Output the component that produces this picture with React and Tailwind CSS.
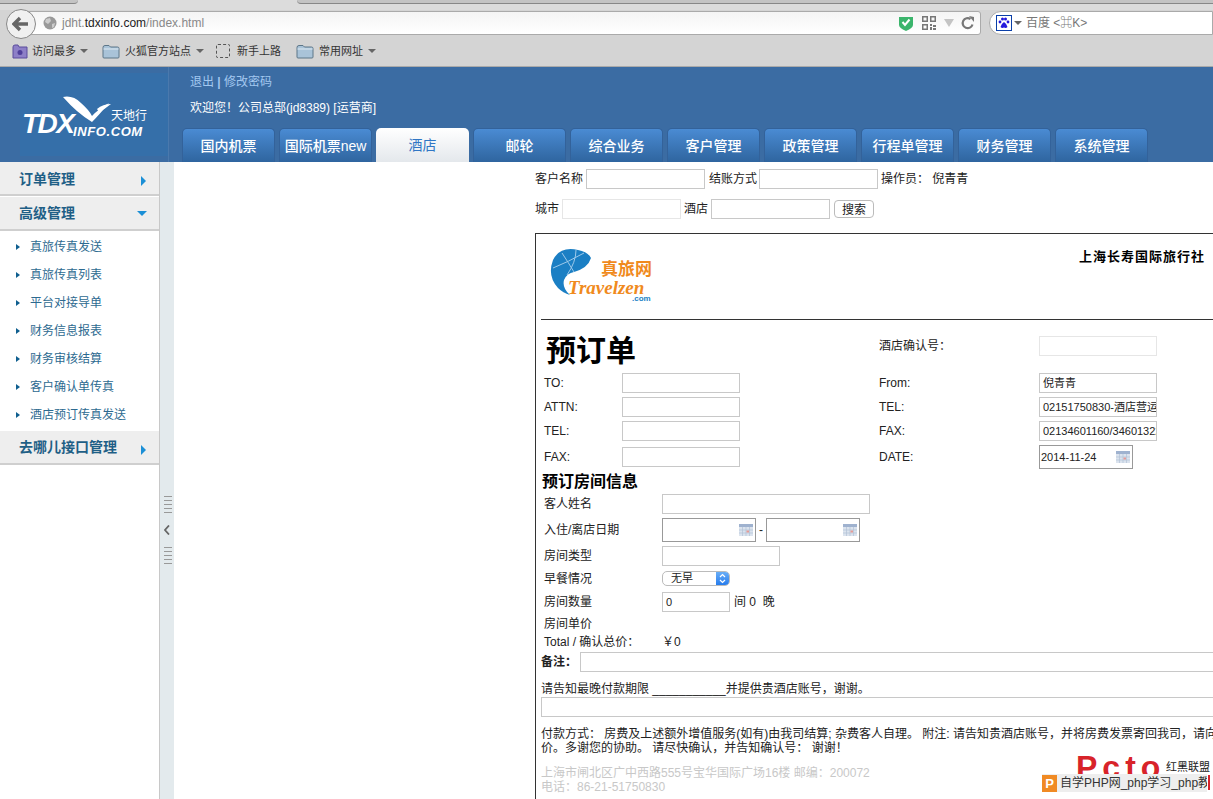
const font = '[font-family:"Liberation_Sans","Noto_Sans_CJK_SC",sans-serif]'

const tabs = ['国内机票', '国际机票new', '酒店', '邮轮', '综合业务', '客户管理', '政策管理', '行程单管理', '财务管理', '系统管理']
const subItems = ['真旅传真发送', '真旅传真列表', '平台对接导单', '财务信息报表', '财务审核结算', '客户确认单传真', '酒店预订传真发送']

function Folder() {
  return (
    <svg width="18" height="15" viewBox="0 0 18 15">
      <path d="M1 3.5 Q1 1.5 3 1.5 H7 L8.5 3 H15.5 Q17 3 17 4.5 V13 Q17 14 16 14 H2 Q1 14 1 13 Z" fill="#a9c3d8" stroke="#5d7688" />
      <path d="M1.5 5 H16.5" stroke="#dfeaf2" />
    </svg>
  )
}

function Calendar() {
  return (
    <svg width="14" height="12" viewBox="0 0 14 12" className="shrink-0">
      <rect width="14" height="12" fill="#dbe3ee" />
      <rect width="14" height="3" fill="#9fb2cf" />
      <path d="M0 6H14M0 9H14M3.5 3V12M7 3V12M10.5 3V12" stroke="#b3c1d6" strokeWidth="0.7" />
      <rect x="7.5" y="6.5" width="2.5" height="2" fill="#e59a96" />
    </svg>
  )
}

function Caret() {
  return <span className="inline-block w-0 h-0 border-x-[4px] border-x-transparent border-t-[4px] border-t-[#666]" />
}

function BrowserChrome() {
  return (
    <div className="h-[67px] shrink-0 bg-[#d4d4d4] border-b border-[#aaa] flex flex-col">
      <div className="h-[10px] bg-[#dcdcdc] flex">
        <div className="w-[78px] h-[4px] bg-[#c4c4c4] border-b border-[#888] rounded-br-md" />
        <div className="ml-[219px] flex-1 h-[4px] bg-[#c4c4c4] border-b border-[#888] rounded-bl-md" />
      </div>
      <div className="h-[26px] flex items-center relative pl-[20px] pr-0">
        <div className="absolute left-[6px] top-[-1px] w-[30px] h-[30px] rounded-full border border-[#888] bg-[#f0f0f0] flex items-center justify-center z-10">
          <svg width="18" height="16" viewBox="0 0 18 16"><path d="M8 2 L2 8 L8 14 M2 8 H16" fill="none" stroke="#666" strokeWidth="3.4" /></svg>
        </div>
        <div className="w-[961px] h-[24px] bg-gradient-to-b from-[#f4f4f4] to-white border border-[#aaa] rounded-[3px] flex items-center pl-[22px] pr-[5px] text-[12px]">
          <svg width="14" height="14" viewBox="0 0 14 14" className="shrink-0"><circle cx="7" cy="7" r="6.5" fill="#999" /><path d="M3 3 L7 2 L8 5 L5 8 L2 6Z M9 8 L12 7 L11 11 L9 12Z" fill="#ccc" /></svg>
          <span className="ml-[5px] text-[#888]">jdht.<span className="text-[#222]">tdxinfo.com</span>/index.html</span>
          <div className="ml-auto flex items-center">
            <svg width="14" height="15" viewBox="0 0 14 15"><path d="M0 1 H14 V9 Q14 12 7 15 Q0 12 0 9Z" fill="#3bb56c" /><path d="M3.5 6 L6 9 L10.5 3.5" fill="none" stroke="#fff" strokeWidth="2" /></svg>
            <svg width="14" height="14" viewBox="0 0 14 14" className="ml-[9px]" fill="#777"><path d="M0 0H6V6H0Z M1.5 1.5V4.5H4.5V1.5Z M8 0H14V6H8Z M9.5 1.5V4.5H12.5V1.5Z M0 8H6V14H0Z M1.5 9.5V12.5H4.5V9.5Z M8 8H10V10H8Z M11 9H14V11H11Z M8 11H10V14H8Z M11 12H14V14H11Z" fillRule="evenodd" /></svg>
            <span className="ml-[8px] w-0 h-0 border-x-[5px] border-x-transparent border-t-[8px] border-t-[#c4c4c4]" />
            <svg width="14" height="14" viewBox="0 0 14 14" className="ml-[7px]"><path d="M11.5 8.5 A5 5 0 1 1 9.5 3" fill="none" stroke="#777" strokeWidth="2.2" /><path d="M8 0 L13 1 V6Z" fill="#777" /></svg>
          </div>
        </div>
        <div className="ml-[8px] flex-1 h-[24px] bg-white border border-[#aaa] rounded-l-[12px] flex items-center pl-[6px] text-[12px] text-[#777]">
          <span className="w-[16px] h-[16px] border border-[#0a3fa8] bg-white flex items-center justify-center">
            <svg width="12" height="12" viewBox="0 0 12 12" fill="#2319dc"><circle cx="2" cy="5" r="1.4" /><circle cx="4.5" cy="2" r="1.5" /><circle cx="7.5" cy="2" r="1.5" /><circle cx="10" cy="5" r="1.4" /><path d="M6 5 Q9 7 9.5 10 Q8 11.5 6 10.5 Q4 11.5 2.5 10 Q3 7 6 5Z" /></svg>
          </span>
          <span className="ml-[2px] mr-[4px] flex items-center"><Caret /></span>
          <span>百度 &lt;⌘K&gt;</span>
        </div>
      </div>
      <div className="flex-1 flex items-center pl-[12px] text-[11px] text-[#333]">
        <span className="flex items-center gap-[4px] w-[90px]">
          <svg width="16" height="15" viewBox="0 0 16 15"><path d="M1 3 Q1 1 3 1 H6 L7 3 H15 V14 H1Z" fill="#8d7fc7" stroke="#5b4c9c" /><circle cx="8" cy="8.5" r="2.5" fill="#4f3f9a" /></svg>
          访问最多 <Caret />
        </span>
        <span className="flex items-center gap-[5px] w-[114px]"><Folder />火狐官方站点 <Caret /></span>
        <span className="flex items-center gap-[7px] w-[80px]">
          <span className="w-[14px] h-[14px] border border-dashed border-[#555] rounded-[2px]" />新手上路
        </span>
        <span className="flex items-center gap-[5px]"><Folder />常用网址 <Caret /></span>
      </div>
    </div>
  )
}

function Header() {
  return (
    <div className="h-[95px] shrink-0 bg-[#3b6ca3] flex">
      <div className="w-[169px] pl-[20px] pt-[6px] border-r border-[#4a79ad] relative">
        <div className="w-[148px] h-[83px] bg-[#356fa9] relative text-white italic font-bold">
          <svg width="60" height="40" viewBox="0 0 60 40" className="absolute left-[41px] top-[22px]">
            <path d="M2 2 Q12 0 20 8 Q28 15 31 21 Q35 16 48 8 Q38 20 31 27 Q16 18 2 2Z" fill="#fff" />
            <path d="M36 14 Q42 9 50 9 Q44 14 38 17Z" fill="#fff" />
          </svg>
          <span className="absolute left-[2px] top-[37px] text-[28px] leading-none tracking-[-1.5px]">TDX</span>
          <span className="absolute left-[53px] top-[52px] text-[13px] leading-none tracking-[0.6px]">INFO.COM</span>
          <span className="absolute left-[91px] top-[37px] text-[12px] leading-none not-italic font-normal">天地行</span>
        </div>
      </div>
      <div className="pl-[13px] flex flex-col">
        <div className="pl-[8px] pt-[7px] text-[12px] leading-[16px] text-[#a3c8f0]">退出 <span className="font-bold">|</span> 修改密码</div>
        <div className="pl-[8px] pt-[10px] text-[12px] leading-[16px] text-white">欢迎您！公司总部(jd8389) [运营商]</div>
        <div className="flex gap-[4px] mt-auto">
          {tabs.map((t) => t === '酒店' ? (
            <div key={t} className="w-[93px] h-[34px] pt-[1px] rounded-t-[5px] bg-gradient-to-b from-white to-[#e4e8ec] text-[#2f76c5] text-[14px] flex items-center justify-center">{t}</div>
          ) : (
            <div key={t} className="w-[93px] h-[34px] pt-[1px] rounded-t-[5px] border border-b-0 border-[#33629a] bg-gradient-to-b from-[#4a8bd3] to-[#2f659f] text-white text-[14px] font-medium whitespace-nowrap flex items-center justify-center">{t}</div>
          ))}
        </div>
      </div>
    </div>
  )
}

function SideHead({ label, open, textClass = '' }) {
  return (
    <div className="h-[34px] bg-[#eeeeee] border-b-2 border-[#cfcfcf] flex items-center pl-[19px] pr-[12px] text-[14px] font-bold text-[#1f5f86]">
      <span className={`flex-1 ${textClass}`}>{label}</span>
      {open
        ? <span className="w-0 h-0 border-x-[5px] border-x-transparent border-t-[5px] border-t-[#1b8fd6]" />
        : <span className="mt-[6px] mr-[1px] w-0 h-0 border-y-[5px] border-y-transparent border-l-[5px] border-l-[#1b8fd6]" />}
    </div>
  )
}

function Sidebar() {
  return (
    <div className="w-[160px] shrink-0 border-r border-[#c8c8c8] bg-white">
      <SideHead label="订单管理" textClass="mt-[2px]" />
      <div className="h-px" />
      <SideHead label="高级管理" open />
      <div className="pt-[2px] pb-[2px]">
        {subItems.map((s) => (
          <div key={s} className="h-[28px] flex items-center pl-[16px] text-[12px] text-[#2d6a90]">
            <span className="w-0 h-0 border-y-[3.5px] border-y-transparent border-l-[4px] border-l-[#0f5f8f] mr-[10px]" />
            {s}
          </div>
        ))}
      </div>
      <SideHead label="去哪儿接口管理" />
    </div>
  )
}

function Splitter() {
  const bars = [0, 1, 2, 3, 4]
  return (
    <div className="w-[14px] shrink-0 bg-[#e3eaed] flex flex-col items-center pt-[334px] pl-[1px]">
      <div className="flex flex-col gap-[3px] w-[8px]">{bars.map((b) => <div key={b} className="h-px bg-[#999]" />)}</div>
      <svg width="6" height="10" viewBox="0 0 6 10" className="mt-[12px] mb-[12px] -ml-[1px]"><path d="M5 0.5 L1 5 L5 9.5" fill="none" stroke="#666" strokeWidth="1.8" /></svg>
      <div className="flex flex-col gap-[3px] w-[8px]">{bars.map((b) => <div key={b} className="h-px bg-[#999]" />)}</div>
    </div>
  )
}

function Field({ className = '', children }) {
  return <div className={`h-[20px] border border-[#c8c8c8] bg-white overflow-hidden whitespace-nowrap pl-[3px] flex items-center text-[11px] ${className}`}>{children}</div>
}

function DateField({ className = '', value }) {
  return (
    <div className={`h-[24px] border border-[#999] bg-white flex items-center justify-between pr-[2px] pl-[1px] text-[11px] ${className}`}>
      <span>{value}</span><Calendar />
    </div>
  )
}

function LeftRow({ label, mt = 'mt-[4px]' }) {
  return (
    <div className={`flex items-center h-[20px] ${mt}`}>
      <span className="w-[78px]">{label}</span>
      <Field className="w-[118px]" />
    </div>
  )
}

function RightRow({ label, children, mt = 'mt-[4px]' }) {
  return (
    <div className={`flex items-center h-[20px] ${mt}`}>
      <span className="w-[160px]">{label}</span>
      {children}
    </div>
  )
}

function RoomRow({ label, h = 'h-[20px]', mt = 'mt-0', children }) {
  return (
    <div className={`flex items-center ${h} ${mt}`}>
      <span className="w-[118px] whitespace-nowrap">{label}</span>
      {children}
    </div>
  )
}

function TravelzenLogo() {
  return (
    <div className="relative w-[102px] h-[58px]">
      <svg width="102" height="58" viewBox="0 0 102 58" className="absolute inset-0">
        <path d="M28 2 Q10 -2 3 12 Q-3 28 8 40 Q13 45 20 47 Q12 40 14 32 Q17 25 24 24 Q38 20 41 10 Q38 4 28 2Z" fill="#1b7fc4" />
        <path d="M3 20 Q18 14 34 5 M12 5 Q18 14 24 24 M26 2 Q26 14 17 27" fill="none" stroke="#9dc9ea" strokeWidth="1" />
      </svg>
      <span className="absolute left-[51px] top-[11px] text-[17px] leading-none font-bold text-[#f08a1d] [font-family:'Noto_Sans_CJK_SC',sans-serif]">真旅网</span>
      <span className="absolute left-[18px] top-[30px] text-[19px] leading-none font-bold italic text-[#f08a1d] [font-family:'Liberation_Serif',serif]">Travelzen</span>
      <span className="absolute left-[82px] top-[47px] text-[8px] leading-none font-bold text-[#1b7fc4]">.com</span>
    </div>
  )
}

function Document() {
  return (
    <div className="mt-[14px] w-[900px] border border-[#333] pl-[5px] pb-[60px] text-[12px] text-[#222]">
      <div className="h-[86px] border-b border-[#333] relative pl-[9px] pt-[14px]">
        <TravelzenLogo />
        <div className="absolute left-[538px] top-[14px] text-[13px] leading-[18px] font-bold tracking-[1px] text-black">上海长寿国际旅行社</div>
      </div>

      <div className="flex">
        <div className="w-[338px] pl-[3px]">
          <div className="h-[53px] text-[30px] font-bold leading-[53px] text-black pl-[2px] pt-[4px]">预订单</div>
          <LeftRow label="TO:" mt="mt-0" />
          <LeftRow label="ATTN:" />
          <LeftRow label="TEL:" />
          <LeftRow label="FAX:" mt="mt-[6px]" />
        </div>
        <div>
          <RightRow label="酒店确认号：" mt="mt-[16px]"><Field className="w-[118px] border-[#e6e6e6]" /></RightRow>
          <RightRow label="From:" mt="mt-[17px]"><Field className="w-[118px]">倪青青</Field></RightRow>
          <RightRow label="TEL:"><Field className="w-[118px]">02151750830-酒店营运</Field></RightRow>
          <RightRow label="FAX:"><Field className="w-[118px]">02134601160/34601322</Field></RightRow>
          <RightRow label="DATE:" mt="mt-[6px]"><DateField className="w-[94px]" value="2014-11-24" /></RightRow>
        </div>
      </div>

      <div className="pl-[1px] mt-[5px] text-[16px] leading-[20px] font-bold text-black">预订房间信息</div>
      <div className="pl-[3px] mt-[2px]">
        <RoomRow label="客人姓名"><Field className="w-[208px]" /></RoomRow>
        <RoomRow label="入住/离店日期" h="h-[24px]" mt="mt-[4px]">
          <DateField className="w-[94px]" />
          <span className="w-[10px] text-center">-</span>
          <DateField className="w-[94px]" />
        </RoomRow>
        <RoomRow label="房间类型" mt="mt-[4px]"><Field className="w-[118px]" /></RoomRow>
        <RoomRow label="早餐情况" h="h-[15px]" mt="mt-[5px]">
          <div className="w-[68px] h-[15px] border border-[#bbb] rounded-[5px] bg-white flex items-center justify-between text-[11px] pl-[8px] overflow-hidden">
            无早
            <span className="w-[13px] h-[15px] bg-gradient-to-b from-[#6db1f7] to-[#1f78ec] flex items-center justify-center">
              <svg width="7" height="11" viewBox="0 0 7 11"><path d="M1 4 L3.5 1.5 L6 4 M1 7 L3.5 9.5 L6 7" fill="none" stroke="#fff" strokeWidth="1.2" /></svg>
            </span>
          </div>
        </RoomRow>
        <RoomRow label="房间数量" mt="mt-[6px]">
          <Field className="w-[68px]">0</Field>
          <span className="ml-[4px]">间 0&nbsp; 晚</span>
        </RoomRow>
        <RoomRow label="房间单价" mt="mt-[2px]" />
        <RoomRow label="Total / 确认总价：" h="h-[16px]" mt="mt-0"><span>￥0</span></RoomRow>
      </div>

      <div className="flex items-center h-[20px] mt-[2px]">
        <span className="w-[39px] font-bold">备注：</span>
        <Field className="flex-1" />
      </div>
      <div className="mt-[10px] leading-[14px]">请告知最晚付款期限 ___________并提供贵酒店账号，谢谢。</div>
      <Field className="mt-[1px] w-full" />
      <div className="mt-[10px] leading-[14px] w-[738px]">
        付款方式： 房费及上述额外增值服务(如有)由我司结算; 杂费客人自理。 附注: 请告知贵酒店账号，并将房费发票寄回我司，请向客人收取差价。多谢您的协助。 请尽快确认，并告知确认号： 谢谢！
      </div>
      <div className="mt-[11px] leading-[14px] text-[#c8c8c8]">
        <div>上海市闸北区广中西路555号宝华国际广场16楼 邮编：200072</div>
        <div>电话：86-21-51750830</div>
      </div>
    </div>
  )
}

function Watermark() {
  return (
    <div className="absolute right-0 bottom-[6px] w-[171px] h-[44px] overflow-hidden">
      <div className="absolute left-[34px] top-0 w-[90px] h-[25px] overflow-hidden">
        <span className="block pt-[2px] text-[32px] font-bold leading-none tracking-[5px] text-[#d8232a]">Pcto</span>
      </div>
      <span className="absolute left-[124px] top-[13px] text-[11px] leading-none text-[#222] whitespace-nowrap">红黑联盟</span>
      <div className="absolute left-0 top-[25px] h-[18px] w-[165px] bg-[#eee] flex items-center text-[12px] text-[#333] whitespace-nowrap overflow-hidden">
        <span className="w-[15px] h-[17px] shrink-0 bg-[#f08a24] text-white text-[13px] font-bold text-center leading-[17px] mr-[3px]">P</span>
        自学PHP网_php学习_php教程
      </div>
      <div className="absolute left-[166px] top-[26px] w-[2px] h-[15px] bg-[#d8232a]" />
    </div>
  )
}

export default function App() {
  return (
    <div className={`h-screen w-full overflow-hidden flex flex-col bg-white ${font}`}>
      <BrowserChrome />
      <Header />
      <div className="flex-1 flex min-h-0 relative">
        <Sidebar />
        <Splitter />
        <div className="flex-1 overflow-hidden pl-[361px] text-[12px] text-[#222] min-w-0">
          <div className="flex items-center h-[20px] mt-[7px] whitespace-nowrap">
            <span className="mr-[3px]">客户名称</span>
            <Field className="w-[119px]" />
            <span className="ml-[4px] mr-[2px]">结账方式</span>
            <Field className="w-[119px]" />
            <span className="ml-[3px]">操作员： 倪青青</span>
          </div>
          <div className="flex items-center h-[20px] mt-[10px] whitespace-nowrap">
            <span className="mr-[3px]">城市</span>
            <Field className="w-[119px] border-[#e6e6e6]" />
            <span className="ml-[3px] mr-[3px]">酒店</span>
            <Field className="w-[119px]" />
            <button className="ml-[4px] w-[40px] h-[18px] border border-[#bbb] rounded-[4px] bg-white text-[12px] text-[#222]">搜索</button>
          </div>
          <Document />
        </div>
        <Watermark />
      </div>
    </div>
  )
}
